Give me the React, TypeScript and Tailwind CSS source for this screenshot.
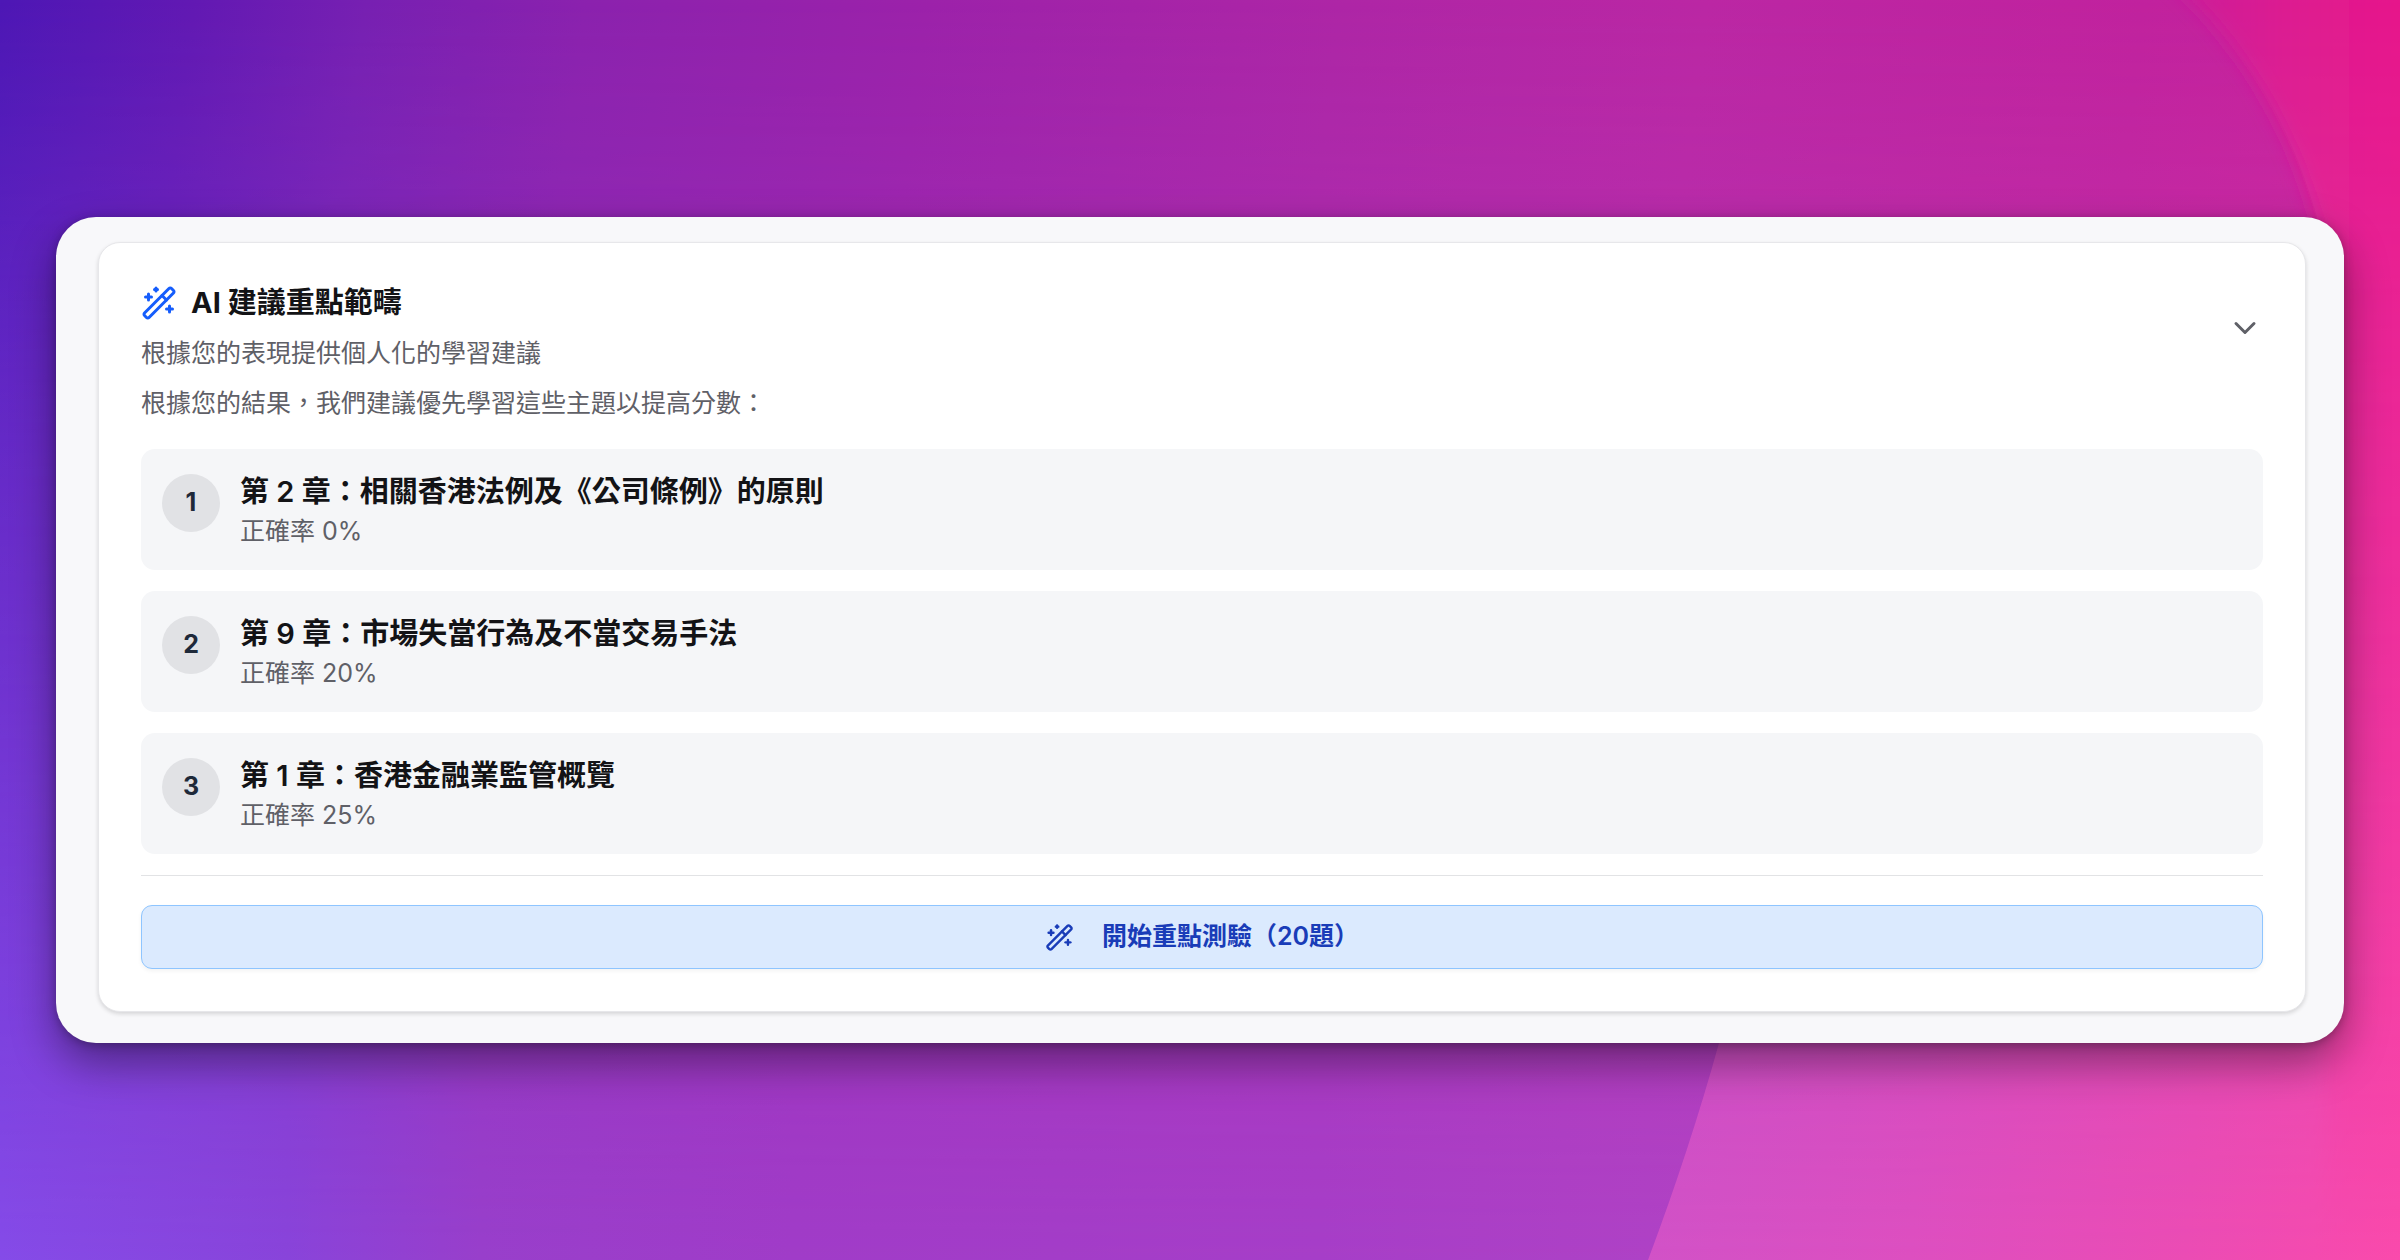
import { ChevronDown, WandSparkles } from 'lucide-react';

const topics = [
  { title: '第 2 章：相關香港法例及《公司條例》的原則', accuracy: 0 },
  { title: '第 9 章：市場失當行為及不當交易手法', accuracy: 20 },
  { title: '第 1 章：香港金融業監管概覽', accuracy: 25 }
];

function Backdrop() {
  return (
    <svg
      className="absolute inset-0 h-full w-full"
      viewBox="0 0 2400 1260"
      preserveAspectRatio="none"
      aria-hidden="true"
    >
      <defs>
        <linearGradient id="top" x1="0" y1="0" x2="2400" y2="300" gradientUnits="userSpaceOnUse">
          <stop offset="0" stopColor="#4d17b5" />
          <stop offset="0.08" stopColor="#6219b3" />
          <stop offset="0.15" stopColor="#7720b2" />
          <stop offset="0.24" stopColor="#8b22ae" />
          <stop offset="0.38" stopColor="#9c22aa" />
          <stop offset="0.55" stopColor="#ae26a6" />
          <stop offset="0.7" stopColor="#bb27a4" />
          <stop offset="0.88" stopColor="#c1229e" />
          <stop offset="1" stopColor="#cc209a" />
        </linearGradient>
        <linearGradient id="bottom" x1="0" y1="1260" x2="2400" y2="1260" gradientUnits="userSpaceOnUse">
          <stop offset="0" stopColor="#854be8" />
          <stop offset="0.12" stopColor="#8944da" />
          <stop offset="0.2" stopColor="#983fcb" />
          <stop offset="0.33" stopColor="#a03cc8" />
          <stop offset="0.55" stopColor="#a63ec8" />
          <stop offset="0.72" stopColor="#b043c5" />
          <stop offset="1" stopColor="#d24ab8" />
        </linearGradient>
        <linearGradient id="pinkTop" x1="2175" y1="0" x2="2400" y2="0" gradientUnits="userSpaceOnUse">
          <stop offset="0" stopColor="#cb2099" />
          <stop offset="0.55" stopColor="#de1b90" />
          <stop offset="1" stopColor="#e6188b" />
        </linearGradient>
        <linearGradient id="pinkBottom" x1="1640" y1="1200" x2="2420" y2="1260" gradientUnits="userSpaceOnUse">
          <stop offset="0" stopColor="#d152c7" />
          <stop offset="0.35" stopColor="#dd4fc0" />
          <stop offset="0.7" stopColor="#eb4cb4" />
          <stop offset="1" stopColor="#fb4aab" />
        </linearGradient>
        <linearGradient id="fade" x1="0" y1="0" x2="0" y2="1">
          <stop offset="0" stopColor="#000" />
          <stop offset="1" stopColor="#fff" />
        </linearGradient>
        <mask id="down" maskUnits="userSpaceOnUse" x="0" y="0" width="2400" height="1260" style={{ maskType: 'luminance' }}>
          <rect width="2400" height="1260" fill="url(#fade)" />
        </mask>
        <filter id="soft" x="-20%" y="-20%" width="140%" height="140%">
          <feGaussianBlur stdDeviation="9" />
        </filter>
      </defs>
      <rect width="2400" height="1260" fill="url(#top)" />
      <rect width="2400" height="1260" fill="url(#bottom)" mask="url(#down)" />
      <path
        d="M2150 -40 Q2290 80 2326 260 V1300 H2460 V-40 Z"
        fill="url(#pinkTop)"
        filter="url(#soft)"
      />
      <path
        d="M2460 0 H2190 Q2290 90 2328 260 V600 H1840 Q1780 860 1719 1043 Q1690 1148 1648 1260 H2460 Z"
        fill="url(#pinkBottom)"
        mask="url(#down)"
      />
    </svg>
  );
}

export default function App() {
  return (
    <main
      lang="zh-Hant"
      className="relative flex min-h-screen items-center overflow-hidden bg-[#a02fb8] px-14 font-['Inter','Noto_Sans_CJK_TC',sans-serif]"
    >
      <Backdrop />

      <div className="relative w-full rounded-[40px] bg-[#f8f8fa] pt-[25px] pr-[38px] pb-[31px] pl-[42px] shadow-[0_20px_44px_rgba(0,0,0,0.4),0_2px_10px_rgba(0,0,0,0.25)]">
        <section className="rounded-[22px] border border-[#e7e7ea] bg-white p-[42px] shadow-[0_2px_4px_rgba(0,0,0,0.14)]">
          {/* Header */}
          <header className="flex items-center justify-between">
            <div>
              <h2 className="flex items-center gap-[14px] text-[29px] leading-9 font-bold text-[#131316]">
                <WandSparkles className="size-9 text-[#155dfc]" />
                AI 建議重點範疇
              </h2>
              <p className="mt-[14px] text-[25px] leading-9 text-[#5f6067]">
                根據您的表現提供個人化的學習建議
              </p>
            </div>
            <button type="button" aria-label="收合" className="text-[#5f6067]">
              <ChevronDown className="size-9" />
            </button>
          </header>

          <p className="mt-[14px] text-[25px] leading-9 text-[#5f6067]">
            根據您的結果，我們建議優先學習這些主題以提高分數：
          </p>

          {/* Topics */}
          <ol className="mt-7 space-y-[21px]">
            {topics.map((topic, index) => (
              <li key={topic.title} className="flex items-start gap-5 rounded-[14px] bg-[#f5f6f8] p-[21px]">
                <span className="mt-1 flex size-[58px] shrink-0 items-center justify-center rounded-full bg-[#e1e2e5] text-[25px] font-bold text-[#1e2939]">
                  {index + 1}
                </span>
                <div>
                  <h3 className="text-[29px] leading-[43px] font-semibold text-[#131316]">{topic.title}</h3>
                  <p className="text-[25px] leading-9 text-[#5f6067]">正確率 {topic.accuracy}%</p>
                </div>
              </li>
            ))}
          </ol>

          {/* Start quiz */}
          <div className="mt-[21px] border-t border-[#e2e3e5] pt-[29px]">
            <button
              type="button"
              className="flex h-16 w-full items-center justify-center gap-7 rounded-[11px] border border-[#8ec5ff] bg-[#dbeafe] text-[25px] font-semibold text-[#193cb8] shadow-[0_2px_4px_rgba(0,0,0,0.05)]"
            >
              <WandSparkles className="size-[29px]" />
              開始重點測驗（20題）
            </button>
          </div>
        </section>
      </div>
    </main>
  );
}
